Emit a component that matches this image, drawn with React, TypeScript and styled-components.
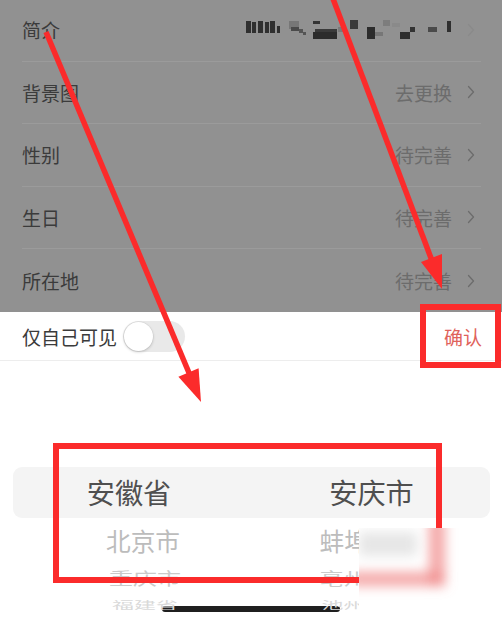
import React from 'react';
import styled, { createGlobalStyle } from 'styled-components';

const Global = createGlobalStyle`
  html, body { margin: 0; padding: 0; background: #fff; }
  body { font-family: "Noto Sans CJK SC", "Noto Sans", sans-serif; }
  * { box-sizing: border-box; }
`;

const Screen = styled.div`
  position: relative;
  width: 502px;
  height: 619px;
  overflow: hidden;
  background: #fff;
`;

/* profile list, dimmed behind the bottom sheet */
const Dimmed = styled.section`
  display: flex;
  flex-direction: column;
  height: 313px;
  margin-top: -1px;
  background: #919191;
`;

const Row = styled.div<{ $last?: boolean }>`
  flex: ${p => (p.$last ? '1' : 'none')};
  height: 62.5px;
  margin: 0 21px 0 22px;
  display: flex;
  align-items: center;
  justify-content: space-between;
  border-bottom: ${p => (p.$last ? 'none' : '1px solid #9b9b9b')};
`;

const Label = styled.span`
  font-size: 19px;
  line-height: 1;
  color: #3b3b3b;
`;

const Value = styled.span`
  display: flex;
  align-items: center;
  gap: 15px;
  font-size: 19px;
  line-height: 1;
  color: #6c6c6c;
  padding-right: 6px;
`;

const Chevron = ({ faint }: { faint?: boolean }) => (
  <svg width="8" height="14" viewBox="0 0 8 14">
    <polyline
      points="1.5,1.5 6.5,7 1.5,12.5"
      fill="none"
      stroke={faint ? '#8a8a8a' : '#6c6c6c'}
      strokeWidth="1.3"
      strokeLinecap="round"
      strokeLinejoin="round"
    />
  </svg>
);

/* pixelated bio text */
const Mosaic = () => (
  <svg width="206" height="22" viewBox="243 23 206 22">
    <g fill="#2f2f2f">
      <rect x="243" y="25" width="5" height="12" />
      <rect x="249" y="26" width="4" height="11" />
      <rect x="255" y="25" width="5" height="12" />
      <rect x="262" y="26" width="4" height="11" />
      <rect x="267" y="25" width="5" height="12" />
      <rect x="274" y="30" width="3" height="7" />
    </g>
    <rect x="286" y="25" width="10" height="8" fill="#777" />
    <rect x="288" y="31" width="8" height="4" fill="#4a4a4a" />
    <rect x="296" y="33" width="4" height="4" fill="#555" />
    <rect x="300" y="36" width="3" height="3" fill="#555" />
    <rect x="310" y="25" width="7" height="3" fill="#333" />
    <rect x="312" y="33" width="22" height="3" fill="#3a3a3a" />
    <rect x="310" y="36" width="24" height="7" fill="#2c2c2c" />
    <rect x="335" y="31" width="6" height="5" fill="#7a7a7a" />
    <rect x="347" y="24" width="8" height="9" fill="#3a3a3a" />
    <rect x="364" y="31" width="8" height="12" fill="#2c2c2c" />
    <rect x="372" y="36" width="8" height="4" fill="#777" />
    <rect x="380" y="24" width="7" height="6" fill="#7d7d7d" />
    <rect x="389" y="27" width="8" height="4" fill="#8a8a8a" />
    <rect x="397" y="36" width="10" height="7" fill="#2f2f2f" />
    <rect x="407" y="31" width="5" height="5" fill="#333" />
    <rect x="425" y="31" width="9" height="5" fill="#4a4a4a" />
    <rect x="444" y="25" width="4" height="11" fill="#2f2f2f" />
  </svg>
);

/* bottom sheet with region picker */
const Sheet = styled.section`
  display: flex;
  flex-direction: column;
  background: #fff;
`;

const SheetHeader = styled.div`
  height: 49px;
  padding: 0 20px 0 22px;
  display: flex;
  align-items: center;
  justify-content: space-between;
  border-bottom: 1px solid #ededed;
`;

const Privacy = styled.div`
  display: flex;
  align-items: center;
  gap: 6px;
`;

const Track = styled.span`
  width: 62px;
  height: 31px;
  border-radius: 16px;
  background: #e9e9e9;
  display: flex;
  align-items: center;
  padding: 0 1px;
`;

const Knob = styled.span`
  width: 29px;
  height: 29px;
  border-radius: 50%;
  background: #fff;
  box-shadow: 0 1px 3px rgba(0, 0, 0, 0.2), 0 0 0 0.5px rgba(0, 0, 0, 0.06);
`;

const Confirm = styled.span`
  font-size: 19px;
  line-height: 1;
  color: #df625b;
`;

const Wheel = styled.div`
  margin-top: 106px;
  display: flex;
  flex-direction: column;
`;

const WheelRow = styled.div<{ $h: number; $selected?: boolean }>`
  height: ${p => p.$h}px;
  margin: 0 12px 0 13px;
  display: grid;
  grid-template-columns: 234px 243px;
  align-items: center;
  justify-items: center;
  border-radius: 9px;
  background: ${p => (p.$selected ? '#f4f4f4' : 'transparent')};
`;

const Item = styled.span<{ $size: number; $color: string; $dx: number; $sy: number }>`
  font-size: ${p => p.$size}px;
  line-height: 1;
  color: ${p => p.$color};
  white-space: nowrap;
  transform: translateX(${p => p.$dx}px) scaleY(${p => p.$sy});
`;

const HomeBar = styled.div`
  width: 178px;
  height: 6px;
  margin: 2px auto 0;
  border-radius: 3px;
  background: #1f1f1f;
`;

/* annotation layer: arrows and frames */
const Marks = styled.svg`
  position: absolute;
  left: 0;
  top: 0;
  pointer-events: none;
`;

const Smudge = styled.div`
  position: absolute;
  left: 359px;
  top: 528px;
  width: 143px;
  height: 91px;
  background: #fff;
  overflow: hidden;
`;

const rows = [
  { label: '简介', value: null },
  { label: '背景图', value: '去更换' },
  { label: '性别', value: '待完善' },
  { label: '生日', value: '待完善' },
  { label: '所在地', value: '待完善' },
];

const wheel = [
  { h: 51, size: 28.2, color: '#4f4f4f', sy: 1, left: '安徽省', right: '安庆市', ldx: -1, rdx: 3, selected: true },
  { h: 44, size: 24.7, color: '#bcbcbc', sy: 1, left: '北京市', right: '蚌埠市', ldx: 13, rdx: -12 },
  { h: 32, size: 24, color: '#cacaca', sy: 0.72, left: '重庆市', right: '亳州市', ldx: 15, rdx: -13 },
  { h: 10, size: 22, color: '#d9d9d9', sy: 0.45, left: '福建省', right: '池州市', ldx: 15, rdx: -14 },
];

const RED = '#fb2b2b';

export default function App() {
  return (
    <Screen>
      <Global />
      <Dimmed>
        {rows.map((r, i) => (
          <Row key={r.label} $last={i === rows.length - 1}>
            <Label>{r.label}</Label>
            {r.value ? (
              <Value>
                {r.value}
                <Chevron />
              </Value>
            ) : (
              <Value>
                <Mosaic />
                <Chevron faint />
              </Value>
            )}
          </Row>
        ))}
      </Dimmed>
      <Sheet>
        <SheetHeader>
          <Privacy>
            <Label>仅自己可见</Label>
            <Track>
              <Knob />
            </Track>
          </Privacy>
          <Confirm>确认</Confirm>
        </SheetHeader>
        <Wheel>
          {wheel.map(w => (
            <WheelRow key={w.left} $h={w.h} $selected={w.selected}>
              <Item $size={w.size} $color={w.color} $dx={w.ldx} $sy={w.sy}>{w.left}</Item>
              <Item $size={w.size} $color={w.color} $dx={w.rdx} $sy={w.sy}>{w.right}</Item>
            </WheelRow>
          ))}
        </Wheel>
        <HomeBar />
      </Sheet>

      <Marks width="502" height="619" viewBox="0 0 502 619">
        <line x1="46" y1="32" x2="192" y2="380" stroke={RED} strokeWidth="5.5" />
        <polygon points="201,402 178.4,376.8 198.6,368.2" fill={RED} />
        <line x1="332" y1="-4" x2="434" y2="266" stroke={RED} strokeWidth="5.5" />
        <polygon points="442,289 421,262 442,254" fill={RED} />
        <rect x="423" y="307" width="75" height="58" fill="none" stroke={RED} strokeWidth="6" />
        <rect x="56" y="446" width="383" height="134" fill="none" stroke={RED} strokeWidth="6" />
      </Marks>

      <Smudge>
        <svg width="143" height="91" viewBox="0 0 143 91">
          <defs>
            <filter id="soft" x="-50%" y="-50%" width="200%" height="200%">
              <feGaussianBlur stdDeviation="6" />
            </filter>
          </defs>
          <g filter="url(#soft)">
            <rect x="0" y="4" width="58" height="24" fill="#e6e6e6" />
            <rect x="-10" y="44" width="95" height="14" fill="#f08a8a" opacity="0.75" />
            <rect x="70" y="-10" width="16" height="68" fill="#f08a8a" opacity="0.75" />
          </g>
        </svg>
      </Smudge>
    </Screen>
  );
}
